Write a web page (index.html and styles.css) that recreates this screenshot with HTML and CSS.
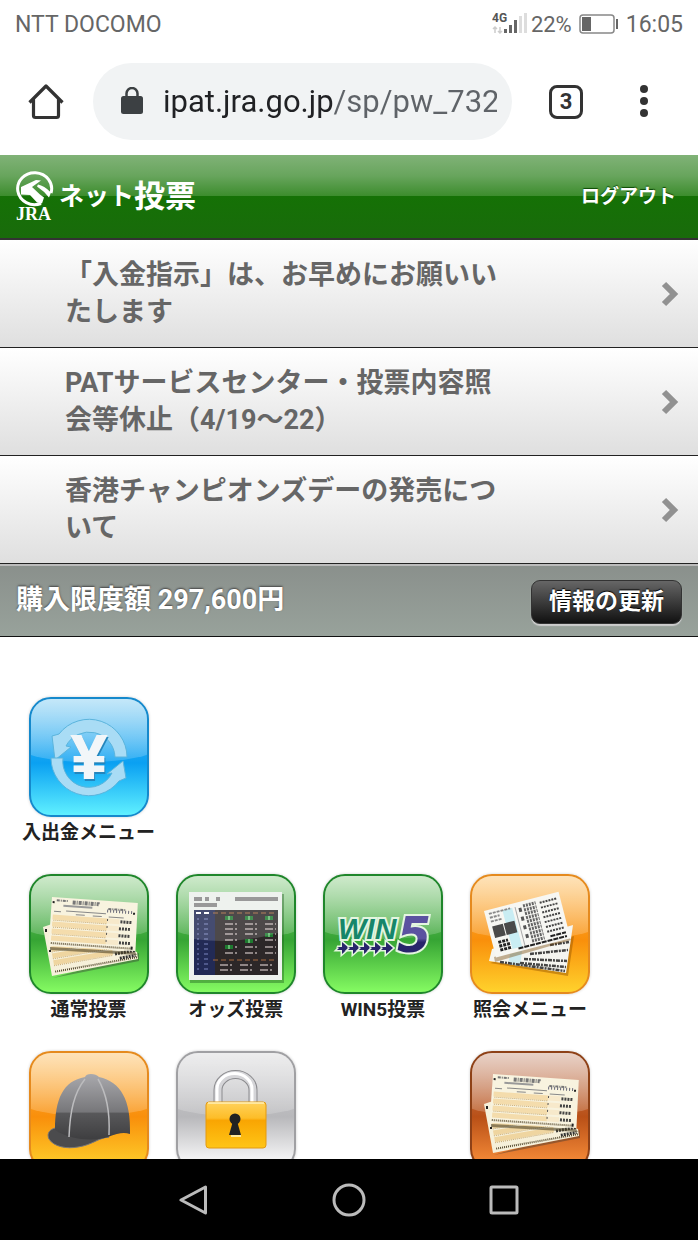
FILE: index.html
```html
<!DOCTYPE html>
<html lang="ja">
<head>
    <meta charset="UTF-8">
    <meta name="viewport" content="width=device-width, initial-scale=1.0">
    <title>JRA ネット投票</title>
    <link rel="stylesheet" href="styles.css">
</head>
<body>
    <div class="status-bar">
        <span>NTT DOCOMO</span>
        <div class="status-right">
            <svg class="signal" width="38" height="26" viewBox="0 0 38 26">
                <text class="signal-type" x="0" y="11">4G</text>
                <path d="M3 22V16M1 18l2-2 2 2M8 16v6M6 20l2 2 2-2" fill="none" stroke="#ccc" stroke-width="1.500"/>
                <path d="M13.500 22v-4M18.500 22V14M23.500 22V9" stroke="#666" stroke-width="3"/>
                <path d="M28.500 22V5M33.500 22V2" stroke="#ddd" stroke-width="3"/>
            </svg>
            <span class="percent">22%</span>
            <svg class="battery" width="39" height="20" viewBox="0 0 39 20">
                <rect x="1" y="1" width="34" height="18" rx="3" fill="#fff" stroke="#888" stroke-width="1.500"/>
                <rect x="3" y="3" width="9" height="14" fill="#666"/>
                <path d="M38 5v10" stroke="#666" stroke-width="2"/>
            </svg>
            <span>16:05</span>
        </div>
    </div>

    <div class="toolbar">
        <button class="icon-button" type="button" aria-label="ホーム">
            <svg width="36" height="36" viewBox="0 0 36 36" fill="none" stroke="#333" stroke-width="3.200" stroke-linejoin="round">
                <path d="M1.500 18.500L18 2l16.500 16.500M5.500 15v16.500a2 2 0 0 0 2 2h21a2 2 0 0 0 2-2V15"/>
            </svg>
        </button>
        <div class="address">
            <svg width="22" height="30" viewBox="0 0 22 30">
                <rect x="0" y="9" width="22" height="18" rx="2.500" fill="#3c4043"/>
                <path d="M5.500 10V6.500a5.500 5.500 0 0 1 11 0V10" fill="none" stroke="#3c4043" stroke-width="2.500"/>
            </svg>
            <input class="url" type="text" value="ipat.jra.go.jp/sp/pw_732" aria-label="アドレス">
        </div>
        <button class="tab-count" type="button">3</button>
        <button class="icon-button" type="button" aria-label="メニュー">
            <svg width="14" height="34" viewBox="0 0 14 34" fill="#333">
                <circle cx="7" cy="4" r="4"/><circle cx="7" cy="16" r="4"/><circle cx="7" cy="28" r="4"/>
            </svg>
        </button>
    </div>

    <main class="page">
        <header class="site-header">
            <h1 class="brand">
                <svg width="40" height="52" viewBox="0 0 40 52">
                    <path d="M26 32.500A17 16 0 1 1 36 22" fill="none" stroke="#fff" stroke-width="3"/>
                    <path d="M6 16L21 9l5 .500-9 6.500 8 7.500 4 3-2 6-5-1-7-7.500-9-.500z" fill="#fff"/>
                    <path d="M23 13.500q6 1 13 8l-2 5q-5-6.500-12-11z" fill="#fff"/>
                    <text class="logo-text" x="1" y="49">JRA</text>
                </svg>
                <span class="brand-kana">ネット</span><span class="brand-kanji">投票</span>
            </h1>
            <a class="logout" href="#">ログアウト</a>
        </header>

        <ul class="notices">
            <li><a class="notice" href="#">
                <span class="notice-text">「入金指示」は、お早めにお願いいたします</span>
                <svg class="chevron" width="20" height="26" viewBox="0 0 20 26"><path d="M3 3l10 10L3 23"/></svg>
            </a></li>
            <li><a class="notice" href="#">
                <span class="notice-text">PATサービスセンター・投票内容照会等休止（4/19〜22）</span>
                <svg class="chevron" width="20" height="26" viewBox="0 0 20 26"><path d="M3 3l10 10L3 23"/></svg>
            </a></li>
            <li><a class="notice" href="#">
                <span class="notice-text">香港チャンピオンズデーの発売について</span>
                <svg class="chevron" width="20" height="26" viewBox="0 0 20 26"><path d="M3 3l10 10L3 23"/></svg>
            </a></li>
        </ul>

        <div class="limit-bar">
            <span class="limit">購入限度額 297,600円</span>
            <button class="refresh" type="button">情報の更新</button>
        </div>

        <nav class="menu">
            <a class="menu-item first" href="#">
                <span class="tile blue">
                    <svg viewBox="0 0 120 120">
                        <g fill="#a9dcf5" stroke="#5bb4dc" stroke-width="1">
                            <path d="M98 60A38 38 0 0 0 30 37L23 39L26 63L42 50L37 49A26 26 0 0 1 86 60z"/>
                            <path d="M22 61A38 38 0 0 0 90 84L97 81L94 64L78 77L83 76A26 26 0 0 1 34 61z"/>
                        </g>
                        <text class="yen yen-shadow" x="61" y="83">¥</text>
                        <text class="yen" x="60" y="81">¥</text>
                    </svg>
                </span>
                <span class="label">入出金メニュー</span>
            </a>
            <a class="menu-item" href="#">
                <span class="tile green">
                    <svg viewBox="0 0 120 120"><use href="#tickets"/></svg>
                </span>
                <span class="label">通常投票</span>
            </a>
            <a class="menu-item" href="#">
                <span class="tile green">
                    <svg viewBox="0 0 120 120">
                        <rect x="14" y="20" width="94" height="89" fill="#1b5b1b" opacity=".4"/>
                        <rect x="13" y="18" width="93" height="88" fill="#eef2ee"/>
                        <path d="M18 25h8M29 25h4M40 25h4M59 25h43M18 31h23" stroke="#999" stroke-width="4"/>
                        <rect x="18" y="36" width="84" height="65" fill="#2c2728"/>
                        <rect x="18" y="36" width="21" height="65" fill="#222a55"/>
                        <path d="M20 39h5M28 39h5" stroke="#fff" stroke-width="2"/>
                        <path d="M37 39h62M37 86h62" stroke="#a66b3f" stroke-width="1" stroke-dasharray="5 3"/>
                        <path d="M21 45h14M21 50h14M21 55h14M21 60h14M21 65h14M21 70h14M21 75h14M21 80h14M21 85h14M21 90h14M21 95h14" stroke="#7a85c0" stroke-width="1" stroke-dasharray="2 5 4 5"/>
                        <path d="M49 50h51M49 55h51M49 60h51M49 66h51M49 73h51M49 79h51M44 91h54M44 96h54" stroke="#8f8686" stroke-width="2" stroke-dasharray="8 2 2 8"/>
                        <path d="M49 44h8M69 44h8M89 44h8M89 61h8M69 67h8M49 73h8" stroke="#1f7a30" stroke-width="4"/>
                        <path d="M53 42v4M73 42v4M93 42v4M93 59v4M73 65v4M53 71v4" stroke="#a9f0ae" stroke-width="1"/>
                        <path d="M18 36h84v23q-42 12-84 6z" fill="#fff" opacity=".16"/>
                    </svg>
                </span>
                <span class="label">オッズ投票</span>
            </a>
            <a class="menu-item" href="#">
                <span class="tile green">
                    <svg viewBox="0 0 120 120">
                        <defs>
                            <linearGradient id="five-fill" x1="0" y1="0" x2="0" y2="1">
                                <stop offset=".55" stop-color="#5b52a0"/>
                                <stop offset=".62" stop-color="#28256b"/>
                            </linearGradient>
                        </defs>
                        <text class="win" x="15" y="65">WIN</text>
                        <text class="five" x="74" y="78">5</text>
                        <g stroke="#e4f5e0" stroke-width="3" paint-order="stroke" fill="#28256b">
                            <path id="arrow" d="M14 73h5v-5l7 6-7 6v-4h-5l2-2z"/>
                            <use href="#arrow" x="11"/><use href="#arrow" x="22"/><use href="#arrow" x="33"/><use href="#arrow" x="44"/>
                        </g>
                    </svg>
                </span>
                <span class="label">WIN5投票</span>
            </a>
            <a class="menu-item" href="#">
                <span class="tile orange">
                    <svg viewBox="0 0 120 120">
                        <path d="M20 89l78 13 6-40z" fill="#9b5a00" opacity=".5"/>
                        <path d="M19 87l3-12 81-24-7 48z" fill="#f5f5f0"/>
                        <path d="M40 80l12-3-2 15-12-2z" fill="#cdebf0"/>
                        <path d="M60 80l38-4M54 85l43 2M50 89l46 4M30 88l65 9M80 71l19-3" stroke="#444" stroke-width="2.500" stroke-dasharray="4 1 2 1"/>
                        <path d="M25 88l76-22-2-4-75 21z" fill="#704000" opacity=".4"/>
                        <g transform="translate(14 37) rotate(-14.500)">
                            <rect width="77" height="48" fill="#f7f7f3"/>
                            <rect x="18" y="4" width="10" height="40" fill="#c9edf3"/>
                            <path d="M4 4h22M4 8h10M4 12h12" stroke="#888" stroke-width="2" stroke-dasharray="3 1"/>
                            <path d="M4 17h11v12H4zM16 17h11v12H16z" fill="#4a4a4a"/>
                            <path d="M6 34h10M6 38h11M6 42h11" stroke="#222" stroke-width="3" stroke-dasharray="3 1"/>
                            <path d="M31 4v40" stroke="#aaa" stroke-width="1"/>
                            <path d="M34 8h3M34 17h3M34 26h3M34 35h3" stroke="#555" stroke-width="4"/>
                            <path d="M39 5h13M39 9h13M39 13h13M39 17h13M39 21h13M39 25h13M39 29h13M39 33h13M39 37h13M39 41h13" stroke="#666" stroke-width="3" stroke-dasharray="2 1"/>
                            <path d="M56 6h17M56 11h17M56 16h17M56 21h17M56 26h17M56 31h17M56 36h17" stroke="#444" stroke-width="2" stroke-dasharray="2 1"/>
                            <path d="M24 45h50M58 41h16" stroke="#222" stroke-width="2" stroke-dasharray="5 1"/>
                        </g>
                    </svg>
                </span>
                <span class="label">照会メニュー</span>
            </a>
            <a class="menu-item" href="#" aria-label="騎手">
                <span class="tile orange">
                    <svg viewBox="0 0 120 120">
                        <defs>
                            <linearGradient id="dome" x1="0" y1="0" x2="0" y2="1">
                                <stop offset="0" stop-color="#a9a9ad"/>
                                <stop offset=".58" stop-color="#77777a"/>
                                <stop offset=".6" stop-color="#58585a"/>
                                <stop offset="1" stop-color="#3e3e40"/>
                            </linearGradient>
                        </defs>
                        <path d="M26 77C19 79 18 84 20 88c5 8 18 10 29 8 14-2 20-9 31-10z" fill="#4b4b4d" stroke="#77777a" stroke-width="1"/>
                        <path d="M26 79C26 48 34 30 56 26q1-3 6-3t8 3c22 5 32 23 31 57-6-2-12-1-22 3-12 4-37 4-53-7z" fill="url(#dome)"/>
                        <path d="M56 28C45 42 41 60 40 86M69 28c10 17 12 35 11 56" fill="none" stroke="#bcbcbe" stroke-width="1.500"/>
                    </svg>
                </span>
            </a>
            <a class="menu-item" href="#" aria-label="暗証番号">
                <span class="tile silver">
                    <svg viewBox="0 0 120 120">
                        <defs>
                            <linearGradient id="lock-body" x1="0" y1="0" x2="0" y2="1">
                                <stop offset="0" stop-color="#ffd25c"/>
                                <stop offset=".35" stop-color="#fdbd28"/>
                                <stop offset=".4" stop-color="#f9a502"/>
                                <stop offset="1" stop-color="#ffc516"/>
                            </linearGradient>
                        </defs>
                        <path d="M42 52V39a17 15 0 0 1 35 0v13" fill="none" stroke="#8b8b8e" stroke-width="9"/>
                        <path d="M42 52V39a17 15 0 0 1 35 0v13" fill="none" stroke="#d5d5d8" stroke-width="7"/>
                        <path d="M41 52V38a17 15 0 0 1 35 0v14" fill="none" stroke="#fff" stroke-width="3"/>
                        <rect x="30" y="51" width="60" height="46" rx="3" fill="url(#lock-body)" stroke="#e39a10" stroke-width="1"/>
                        <path d="M32 52h56" stroke="#fff0b8" stroke-width="1.500"/>
                        <circle cx="59" cy="68" r="5.500" fill="#222"/>
                        <path d="M57 70h4l4 14H53z" fill="#222"/>
                        <path d="M55 85h10" stroke="#ffe89b" stroke-width="2"/>
                    </svg>
                </span>
            </a>
            <a class="menu-item last" href="#" aria-label="投票">
                <span class="tile brown">
                    <svg viewBox="0 0 120 120"><use href="#tickets"/></svg>
                </span>
            </a>
        </nav>
    </main>

    <div class="system-nav">
        <button class="icon-button" type="button" aria-label="戻る">
            <svg width="30" height="34" viewBox="0 0 30 34"><path d="M26.500 4v26L2 17z"/></svg>
        </button>
        <button class="icon-button" type="button" aria-label="ホーム画面">
            <svg width="34" height="34" viewBox="0 0 34 34"><circle cx="17" cy="17" r="15"/></svg>
        </button>
        <button class="icon-button" type="button" aria-label="履歴">
            <svg width="30" height="34" viewBox="0 0 30 34"><rect x="2" y="4" width="26" height="26" rx="1"/></svg>
        </button>
    </div>

    <!-- betting slips, used on two tiles -->
    <svg class="sprite" width="0" height="0" aria-hidden="true">
        <symbol id="tickets" viewBox="0 0 120 120">
            <path d="M24 104l86-17v-8z" fill="#333" opacity=".4"/>
            <path d="M14 53l9-3 85 28 1 7-86 17z" fill="#f6f0da"/>
            <g transform="translate(22 74) rotate(-10)">
                <path d="M0 8h60M0 15h60M0 1h50" stroke="#efd5a0" stroke-width="5"/>
                <path d="M0 11h60M0 18h60M0 4h60" stroke="#c7a973" stroke-width="1" stroke-dasharray="1 1"/>
                <path d="M0 24h84" stroke="#554a30" stroke-width="2" stroke-dasharray="1 1"/>
                <path d="M62 17h20M66 22h16" stroke="#333" stroke-width="3" stroke-dasharray="2 1"/>
            </g>
            <path d="M17 55v3M21 76v2" stroke="#222" stroke-width="2"/>
            <path d="M21 73l85 5 2 3-87-5z" fill="#4d4327" opacity=".6"/>
            <g transform="translate(23 23) rotate(4)">
                <path d="M0 0h86l1 48-87 1z" fill="#f8f3df"/>
                <path d="M2 20h55M2 27h55M2 34h55M2 41h55" stroke="#f4dcac" stroke-width="5"/>
                <path d="M57 20h12M57 27h12M57 34h12M57 41h12" stroke="#f7e9cb" stroke-width="5"/>
                <path d="M3 23h54M3 30h54M3 37h54" stroke="#c7a973" stroke-width="1" stroke-dasharray="1 1"/>
                <path d="M5 3h12M21 3h28M21 5h26M57 8h18" stroke="#777" stroke-width="2" stroke-dasharray="3 1 1 1"/>
                <path d="M12 8h29" stroke="#999" stroke-width="2"/>
                <path d="M56 10h26" stroke="#667" stroke-width="3" stroke-dasharray="1 2"/>
                <path d="M3 14h7M15 13h40M25 16h9M42 16h9M58 16h15" stroke="#888" stroke-width="1"/>
                <path d="M70 20h11M69 27h12M69 34h12M70 41h11" stroke="#444" stroke-width="3" stroke-dasharray="2 1"/>
                <path d="M57 18v28" stroke="#555" stroke-width="1" stroke-dasharray="2 5"/>
                <path d="M2 46h82" stroke="#665a40" stroke-width="2" stroke-dasharray="1 1"/>
                <path d="M2 4v2M83 10v2M83 44v3" stroke="#222" stroke-width="2"/>
            </g>
        </symbol>
    </svg>
</body>
</html>
```

FILE: styles.css
```css
* {
    box-sizing: border-box;
}

body {
    margin: 0;
    height: 100vh;
    display: flex;
    flex-direction: column;
    background: #fff;
    font-family: Roboto, "Noto Sans CJK JP", sans-serif;
    overflow: hidden;
}

a {
    color: inherit;
    text-decoration: none;
}

button {
    font-family: inherit;
    cursor: pointer;
}

svg {
    display: block;
    flex-shrink: 0;
}

.icon-button {
    background: none;
    border: none;
    padding: 0;
}

/* phone status bar */
.status-bar {
    display: flex;
    justify-content: space-between;
    align-items: center;
    height: 48px;
    padding: 0 15px;
    font-size: 23px;
    color: #666;
}

.status-right {
    display: flex;
    align-items: center;
}

.signal-type {
    font-size: 12px;
    font-weight: bold;
    fill: #555;
}

.percent {
    margin: 0 7px 0 1px;
    font-size: 22px;
}

.battery {
    margin-right: 8px;
}

/* browser toolbar */
.toolbar {
    display: flex;
    align-items: center;
    height: 107px;
    padding: 0 47px 0 28px;
}

.address {
    flex: 1;
    min-width: 0;
    display: flex;
    align-items: center;
    gap: 20px;
    height: 77px;
    margin: 0 37px 0 29px;
    padding: 0 15px 0 28px;
    background: #f1f3f4;
    border-radius: 39px;
}

.url {
    flex: 1;
    min-width: 0;
    padding: 0;
    border: none;
    outline: none;
    font-family: inherit;
    font-size: 31px;
    line-height: 40px;
    color: transparent;
    background: linear-gradient(to right, #202124 170px, #5f6368 170px);
    -webkit-background-clip: text;
    background-clip: text;
}

.tab-count {
    width: 34px;
    height: 34px;
    margin-right: 54px;
    padding: 0;
    background: none;
    border: 3px solid #333;
    border-radius: 8px;
    font-size: 22px;
    font-weight: bold;
    line-height: 28px;
    color: #333;
}

.page {
    flex: 1;
    min-height: 0;
    overflow: hidden;
}

/* green header */
.site-header {
    display: flex;
    justify-content: space-between;
    align-items: center;
    height: 85px;
    padding: 0 22px 0 15px;
    background: linear-gradient(#80b277 0%, #68a55d 25%, #3d8d2e 49%, #157106 50%, #196b0b 100%);
    border-bottom: 2px solid #333;
    color: #fff;
}

.brand {
    display: flex;
    align-items: center;
    margin: 0;
    font-weight: bold;
    line-height: 40px;
}

.brand svg {
    margin-right: 4px;
}

.brand-kana {
    font-size: 25px;
}

.brand-kanji {
    font-size: 31px;
}

.logo-text {
    font-family: "Liberation Serif", serif;
    font-size: 18px;
    font-weight: bold;
    fill: #fff;
}

.logout {
    font-size: 19px;
    font-weight: bold;
    line-height: 24px;
    text-shadow: 0 -1px 1px #0c4a04;
}

/* notices */
.notices {
    margin: 0;
    padding: 0;
    list-style: none;
}

.notice {
    display: flex;
    align-items: center;
    justify-content: space-between;
    padding: 17px 17px 16px 65px;
    background: linear-gradient(#fff, #dfdfdf);
    border-bottom: 1px solid #222;
}

.notice-text {
    width: 71%;
    font-size: 27px;
    font-weight: bold;
    line-height: 37px;
    color: #666;
}

.chevron path {
    fill: none;
    stroke: #919191;
    stroke-width: 6;
}

/* purchase limit */
.limit-bar {
    display: flex;
    justify-content: space-between;
    align-items: flex-start;
    height: 73px;
    padding: 14px 16px 0;
    background: linear-gradient(#8a908c, #98a29b);
    border-top: 2px solid #bbb;
    border-bottom: 1px solid #111;
    color: #fff;
}

.limit {
    font-size: 27px;
    font-weight: bold;
    line-height: 40px;
    text-shadow: 0 -1px 2px #444;
}

.refresh {
    height: 44px;
    padding: 0 17px;
    background: linear-gradient(#666, #111);
    border: 1px solid #333;
    border-radius: 9px;
    box-shadow: 0 2px 1px #ccc;
    font-size: 23px;
    font-weight: bold;
    line-height: 40px;
    color: #fff;
    text-shadow: 0 -1px 1px #000;
}

/* menu tiles */
.menu {
    display: grid;
    grid-template-columns: repeat(4, 22%);
    row-gap: 29px;
    padding: 60px 14px 0 15px;
}

.menu-item {
    display: flex;
    flex-direction: column;
    align-items: center;
    gap: 4px;
}

.first {
    grid-column: 1;
}

.first + .menu-item {
    grid-column: 1;
}

.last {
    grid-column: 4;
}

.label {
    font-size: 19px;
    font-weight: bold;
    line-height: 24px;
    white-space: nowrap;
    color: #222;
}

.tile {
    position: relative;
    width: 120px;
    height: 120px;
    border: 2px solid;
    border-radius: 22px;
    overflow: hidden;
    box-shadow: 0 0 3px rgba(0, 0, 0, 0.2);
}

/* gloss over the upper half */
.tile::before {
    content: "";
    position: absolute;
    top: 0;
    left: -10%;
    width: 120%;
    height: 54%;
    border-radius: 0 0 50% 50% / 0 0 16px 16px;
    background: linear-gradient(rgba(255, 255, 255, 0.6), rgba(255, 255, 255, 0.15));
}

.tile svg {
    position: relative;
    width: 120px;
    height: 120px;
    margin: -2px;
}

.blue {
    background: linear-gradient(#6cc4f0, #0aa0f2 55%, #5ff0ff);
    border-color: #1589cc;
}

.green {
    background: linear-gradient(#84c97e, #36a434 55%, #85fb62);
    border-color: #1f862b;
}

.orange {
    background: linear-gradient(#fdb850, #f98f0b 55%, #ffd22c);
    border-color: #e58a1e;
}

.silver {
    background: linear-gradient(#d2d2d4, #b8b8bb 55%, #f1f1f2 90%);
    border-color: #a0a0a3;
}

.brown {
    background: linear-gradient(#c78d72, #b95017 55%, #f58b38 95%);
    border-color: #8e4117;
}

.yen {
    font-family: "Liberation Sans", sans-serif;
    font-size: 62px;
    font-weight: bold;
    text-anchor: middle;
    fill: #f2f6f9;
    stroke: #f2f6f9;
    stroke-width: 2px;
}

.yen-shadow {
    fill: #2486bd;
    stroke: #2486bd;
}

.win,
.five {
    font-weight: bold;
    font-style: italic;
    stroke: #e4f5e0;
    stroke-width: 4px;
    paint-order: stroke;
}

.win {
    font-family: "Liberation Sans", sans-serif;
    font-size: 30px;
    fill: #16866a;
}

.five {
    font-family: "DejaVu Sans", sans-serif;
    font-size: 49px;
    fill: url(#five-fill);
}

/* android buttons */
.system-nav {
    display: flex;
    justify-content: center;
    align-items: center;
    gap: 123px;
    height: 81px;
    background: #000;
}

.system-nav svg {
    fill: none;
    stroke: #bbb;
    stroke-width: 3;
    stroke-linejoin: round;
}

.sprite {
    position: absolute;
}
```
